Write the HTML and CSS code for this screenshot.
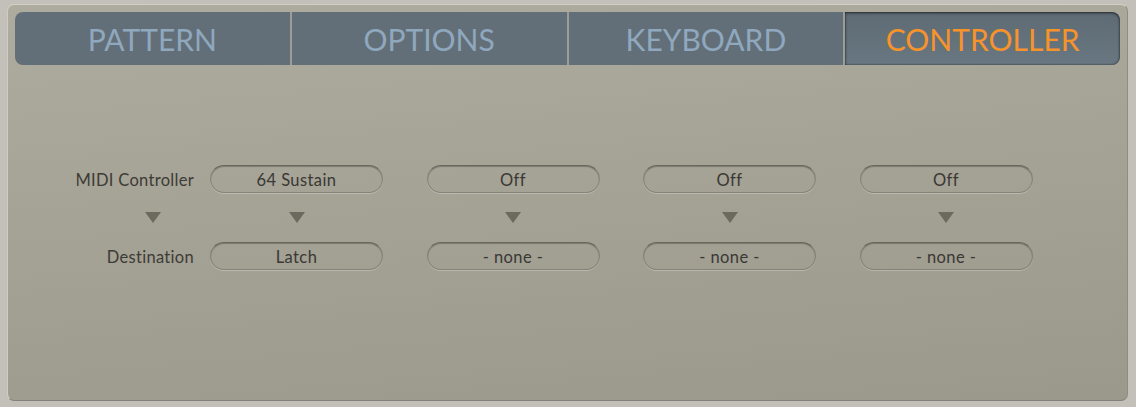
FILE: index.html
```html
<!DOCTYPE html>
<html>
<head>
<meta charset="utf-8">
<link rel="stylesheet" href="styles.css">
</head>
<body>
<div class="panel">
  <div class="tabs">
    <div class="tab">PATTERN</div>
    <div class="sep"></div>
    <div class="tab">OPTIONS</div>
    <div class="sep"></div>
    <div class="tab">KEYBOARD</div>
    <div class="sep"></div>
    <div class="tab active">CONTROLLER</div>
  </div>
  <div class="controls">
    <div class="row">
      <div class="label"><span>MIDI Controller</span></div>
      <div class="pills">
        <div class="pill">64 Sustain</div>
        <div class="pill">Off</div>
        <div class="pill">Off</div>
        <div class="pill">Off</div>
      </div>
    </div>
    <div class="row arrows">
      <div class="label"><span class="tri"></span></div>
      <div class="pills">
        <div class="cell"><span class="tri"></span></div>
        <div class="cell"><span class="tri"></span></div>
        <div class="cell"><span class="tri"></span></div>
        <div class="cell"><span class="tri"></span></div>
      </div>
    </div>
    <div class="row">
      <div class="label"><span>Destination</span></div>
      <div class="pills">
        <div class="pill">Latch</div>
        <div class="pill">- none -</div>
        <div class="pill">- none -</div>
        <div class="pill">- none -</div>
      </div>
    </div>
  </div>
</div>
</body>
</html>
```

FILE: styles.css
```css
html, body {
  margin: 0;
  padding: 0;
}
body {
  width: 1136px;
  height: 407px;
  background: #c3c0b9;
  font-family: Lato, "Noto Sans", sans-serif;
  padding-top: 4px;
  padding-left: 7px;
  box-sizing: border-box;
}
.panel {
  width: 1121px;
  height: 397px;
  box-sizing: border-box;
  border-radius: 7px;
  border-top: 1px solid #d2cfc8;
  border-left: 1px solid #cfccc5;
  border-right: 1px solid #8f8c82;
  border-bottom: 1px solid #84817a;
  background: linear-gradient(175deg, #aeab9f 0%, #a6a397 40%, #9b988c 100%);
  padding: 7px 7px 0 7px;
}
.tabs {
  display: flex;
  height: 53px;
  border-radius: 8px;
  overflow: hidden;
  background: #636f78;
}
.tab {
  flex: 1;
  display: flex;
  align-items: center;
  justify-content: center;
  color: #8fa8be;
  font-size: 30px;
  letter-spacing: 0;
}
.sep {
  width: 2px;
  background: #aba89d;
  opacity: 0.8;
}
.tab.active {
  color: #f7932b;
  background: linear-gradient(180deg, #5e6b74 0%, #687781 100%);
  box-shadow: inset 0 1px 3px rgba(0,0,0,0.55), inset 0 0 2px rgba(0,0,0,0.5);
  border-radius: 0 8px 8px 0;
}
.controls {
  margin-top: 100px;
  margin-left: 97px;
  display: flex;
  flex-direction: column;
}
.row {
  display: flex;
  align-items: center;
  height: 28px;
}
.row.arrows {
  height: 11px;
  margin: 19px 0;
}
.label {
  width: 82px;
  margin-right: 16px;
  display: flex;
  justify-content: flex-end;
  white-space: nowrap;
  color: #3d3b36;
  font-size: 16.5px;
  letter-spacing: 0.3px;
  padding-top: 2px;
}
.arrows .label {
  justify-content: center;
  padding-top: 0;
}
.pills {
  display: flex;
  gap: 43.5px;
}
.pill, .cell {
  width: 173px;
  box-sizing: border-box;
}
.pill {
  height: 28px;
  border-radius: 14px;
  border: 1px solid rgba(90, 87, 78, 0.4);
  border-top-color: rgba(80, 77, 68, 0.7);
  box-shadow: inset 0 1px 1px rgba(0,0,0,0.25), 0 1px 0 rgba(255,255,255,0.25);
  display: flex;
  align-items: center;
  justify-content: center;
  color: #3a3833;
  font-size: 16.5px;
  letter-spacing: 0.4px;
  padding-top: 2px;
}
.cell {
  display: flex;
  justify-content: center;
}
.tri {
  width: 0;
  height: 0;
  border-left: 8px solid transparent;
  border-right: 8px solid transparent;
  border-top: 11px solid #6c695f;
}
```
